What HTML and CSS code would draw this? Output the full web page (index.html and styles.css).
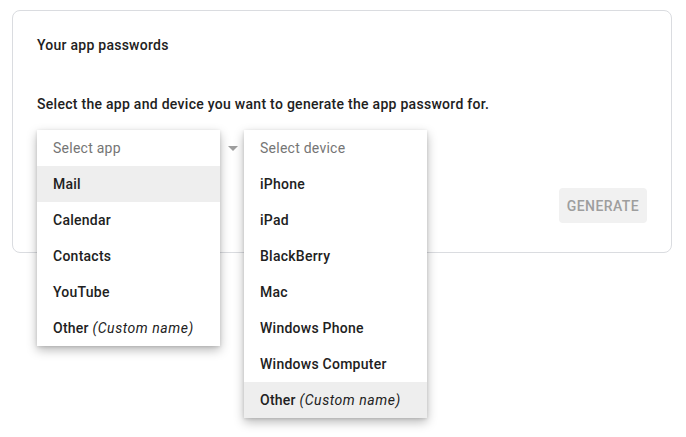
FILE: index.html
```html
<!DOCTYPE html>
<html lang="en">
<head>
  <meta charset="UTF-8" />
  <meta name="viewport" content="width=device-width, initial-scale=1.0"/>
  <title>App passwords</title>
  <link rel="stylesheet" href="styles.css">
</head>
<body>
  <section class="card">
    <h2 class="card-title">Your app passwords</h2>
    <p class="card-text">Select the app and device you want to generate the app password for.</p>

    <div class="field-row">
      <div class="field has-arrow">
        <ul class="menu">
          <li class="menu-head">Select app</li>
          <li class="active">Mail</li>
          <li>Calendar</li>
          <li>Contacts</li>
          <li>YouTube</li>
          <li>Other <em>(Custom name)</em></li>
        </ul>
      </div>

      <div class="field">
        <ul class="menu">
          <li class="menu-head">Select device</li>
          <li>iPhone</li>
          <li>iPad</li>
          <li>BlackBerry</li>
          <li>Mac</li>
          <li>Windows Phone</li>
          <li>Windows Computer</li>
          <li class="active">Other <em>(Custom name)</em></li>
        </ul>
      </div>
    </div>

    <div class="actions">
      <button type="button" class="btn" disabled>Generate</button>
    </div>
  </section>
</body>
</html>
```

FILE: styles.css
```css
/* Global Styles */
html, body {
  height: 100%;
}

body {
  font-family: Roboto, "Liberation Sans", sans-serif;
  background: #ffffff;
  margin: 0;
  padding: 10px 14px 0 12px;
  box-sizing: border-box;
  color: #212121;
  letter-spacing: 0.25px;
}

/* Card */
.card {
  border: 1px solid #dadce0;
  border-radius: 8px;
  padding: 24px 24px 29px 24px;
}

.card-title {
  margin: 0;
  font-size: 14px;
  line-height: 20px;
  font-weight: 500;
}

.card-text {
  margin: 39px 0 0 0;
  font-size: 14px;
  line-height: 20px;
  font-weight: 500;
  letter-spacing: 0.28px;
}

/* Select fields */
.field-row {
  display: flex;
  margin-top: 16px;
}

.field {
  position: relative;
  width: 207px;
  height: 36px;
}

.has-arrow::after {
  content: "";
  position: absolute;
  right: 6px;
  top: 16px;
  border-left: 5px solid transparent;
  border-right: 5px solid transparent;
  border-top: 5px solid #9e9e9e;
}

/* Open dropdown menu */
.menu {
  position: absolute;
  top: 0;
  left: 0;
  z-index: 2;
  width: 183px;
  margin: 0;
  padding: 0;
  list-style: none;
  background: #fff;
  box-shadow: 0 4px 10px rgba(0,0,0,0.28), 0 1px 3px rgba(0,0,0,0.12);
}

.menu li {
  height: 36px;
  line-height: 36px;
  padding: 0 16px;
  font-size: 14px;
  font-weight: 500;
  white-space: nowrap;
}

.menu .menu-head {
  color: #757575;
  font-weight: 400;
}

.menu .active {
  background: #eeeeee;
}

.menu em {
  font-style: italic;
  font-weight: 400;
  letter-spacing: 0.55px;
}

/* Button */
.actions {
  display: flex;
  justify-content: flex-end;
  margin-top: 22px;
}

.btn {
  font-family: inherit;
  background: #f1f1f1;
  color: #9e9e9e;
  border: none;
  border-radius: 4px;
  height: 35px;
  padding: 0 8px;
  font-size: 14px;
  font-weight: 500;
  letter-spacing: 0.4px;
  text-transform: uppercase;
}
```
